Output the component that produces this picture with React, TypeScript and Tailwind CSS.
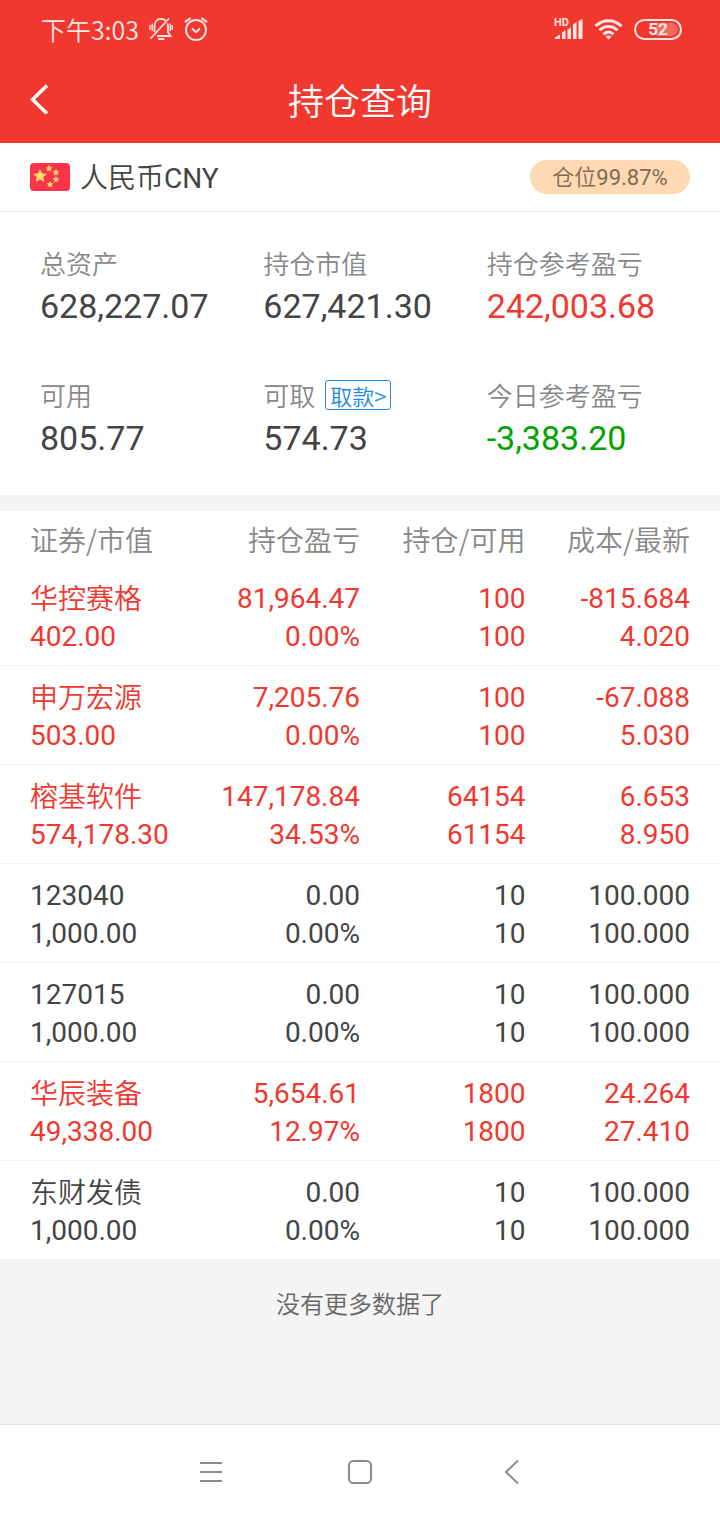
import { ReactNode } from "react";

const summary = [
  { label: "总资产", value: "628,227.07", color: "text-[#444444]" },
  { label: "持仓市值", value: "627,421.30", color: "text-[#444444]" },
  { label: "持仓参考盈亏", value: "242,003.68", color: "text-[#f1382f]" },
  { label: "可用", value: "805.77", color: "text-[#444444]" },
  { label: "可取", value: "574.73", color: "text-[#444444]", withdraw: true },
  { label: "今日参考盈亏", value: "-3,383.20", color: "text-[#00a300]" },
];

const columns = ["证券/市值", "持仓盈亏", "持仓/可用", "成本/最新"];

// each cell holds its upper and lower line
const holdings = [
  { up: true, cells: [["华控赛格", "402.00"], ["81,964.47", "0.00%"], ["100", "100"], ["-815.684", "4.020"]] },
  { up: true, cells: [["申万宏源", "503.00"], ["7,205.76", "0.00%"], ["100", "100"], ["-67.088", "5.030"]] },
  { up: true, cells: [["榕基软件", "574,178.30"], ["147,178.84", "34.53%"], ["64154", "61154"], ["6.653", "8.950"]] },
  { up: false, cells: [["123040", "1,000.00"], ["0.00", "0.00%"], ["10", "10"], ["100.000", "100.000"]] },
  { up: false, cells: [["127015", "1,000.00"], ["0.00", "0.00%"], ["10", "10"], ["100.000", "100.000"]] },
  { up: true, cells: [["华辰装备", "49,338.00"], ["5,654.61", "12.97%"], ["1800", "1800"], ["24.264", "27.410"]] },
  { up: false, cells: [["东财发债", "1,000.00"], ["0.00", "0.00%"], ["10", "10"], ["100.000", "100.000"]] },
];

const cellPadding = ["pl-[30px] text-left", "text-right", "text-right", "pr-[30px] text-right"];

const cjk = "font-['Noto_Sans_CJK_SC',sans-serif] font-[350]";

function isChinese(text: string) {
  return /[\u4e00-\u9fff]/.test(text);
}

function StatusBar() {
  return (
    <div className="flex h-[58px] items-center justify-between pr-[38px] pl-[41px] text-[#ffe6e4]">
      <div className="flex items-center">
        <span className={`text-[25px] leading-[30px] ${cjk}`}>下午3:03</span>
        <svg className="ml-2.5 h-6 w-6" viewBox="0 0 24 24" fill="none" stroke="currentColor" strokeWidth="1.8">
          <path d="M5.500 15V9.500C5.500 5 8 1.800 12 1.800c2 0 3.700.7 4.800 1.900M18.500 6.500c.3.8.4 1.900.4 3V15l2.600 4H8" />
          <path d="M1.500 21.500 20 1.500" />
          <path d="M10 22h4.500" strokeWidth="2.200" strokeLinecap="round" />
          <path d="M1 8v5M3.200 6.500v7.500M21.200 6.500v7.500M23.200 8v5" strokeWidth="1.400" />
        </svg>
        <svg className="ml-[11px] h-6 w-6" viewBox="0 0 24 24" fill="none" stroke="currentColor" strokeWidth="1.800">
          <circle cx="12" cy="13" r="10" />
          <path d="M1 5.200 6.500 1M23 5.200 17.500 1" strokeWidth="2.200" />
          <path d="m8 11.500 4 3.700 4-3.700" strokeWidth="2" />
        </svg>
      </div>
      <div className="flex items-center gap-[11px]">
        <svg className="h-[24px] w-[29px]" viewBox="0 0 29 24" fill="currentColor">
          <text x="0" y="9" fontSize="11" fontWeight="700" fontFamily="Roboto, sans-serif">
            HD
          </text>
          <path d="M1 22v-1.500L6 17.500V22zM8 22v-6.500l3.500-2.500v9zM13.500 22V12.500l3.500-2V22z" />
          <path d="M19 22V7.500l3.500-2.500v17zM24.500 22V4L28.500 2v20z" />
        </svg>
        <svg className="h-[22px] w-[29px]" viewBox="0 0 29 22" fill="none" stroke="currentColor" strokeWidth="3">
          <path d="M1.500 8.200c7.500-7.400 18.500-7.400 26 0" />
          <path d="M5.500 12.300c5.300-5.200 12.700-5.200 18 0" />
          <path d="M9.500 16.300c3-3 7-3 10 0" />
          <path d="M11.500 18.500q3-2.200 6 0l-3 3z" fill="currentColor" stroke="none" />
        </svg>
        <div className="relative flex h-[21px] w-12 items-center justify-center rounded-full border-2 border-[#ffe6e4]">
          <span className="absolute inset-y-0.5 right-0.5 left-5 rounded-r-full bg-white/25" />
          <span className="relative text-[17px] leading-none font-bold">52</span>
        </div>
      </div>
    </div>
  );
}

function Flag() {
  const star = "M0-5 1.500-1.800 5-1.500 2.300.8 3.100 4.300 0 2.400-3.100 4.300-2.300.8-5-1.500-1.500-1.800z";
  return (
    <svg className="h-7 w-10" viewBox="0 0 40 28" fill="#ffd96b" stroke="#ffd96b" strokeLinejoin="round">
      <rect width="40" height="28" rx="4" fill="#fc3449" stroke="none" />
      <path d={star} transform="translate(10 13) scale(1.150)" />
      <path d={star} transform="translate(19 5.500) scale(.6)" />
      <path d={star} transform="translate(26 9.500) scale(.6)" />
      <path d={star} transform="translate(26 16.500) scale(.6)" />
      <path d={star} transform="translate(20 21.500) scale(.6)" />
    </svg>
  );
}

function NavButton({ label, children }: { label: string; children: ReactNode }) {
  return (
    <button type="button" aria-label={label} className="flex h-12 w-12 items-center justify-center">
      <svg className="h-6 w-6" viewBox="0 0 24 24" fill="none" stroke="#8c8c8c" strokeWidth="2">
        {children}
      </svg>
    </button>
  );
}

export default function App() {
  return (
    <div className="flex min-h-screen flex-col bg-[#f4f4f4] font-[Roboto,'Noto_Sans_CJK_SC',sans-serif] text-[#444444]">
      <header className="bg-[#f1382f] pb-px">
        <StatusBar />
        <div className="grid h-[84px] grid-cols-[1fr_auto_1fr] items-center px-[30px] pb-0.5 text-white">
          <button type="button" aria-label="返回" className="w-fit">
            <svg className="h-[30px] w-[18px]" viewBox="0 0 18 30" fill="none" stroke="currentColor" strokeWidth="3.500">
              <path d="M17 1.500 2.500 15.500 17 29.500" />
            </svg>
          </button>
          <h1 className={`text-[36px] leading-[42px] ${cjk}`}>持仓查询</h1>
        </div>
      </header>

      <section className="flex h-[69px] items-center justify-between border-b border-[#ebebeb] bg-white px-[30px]">
        <div className="flex items-center">
          <Flag />
          <span className={`ml-2.5 text-[28px] leading-[40px] ${cjk}`}>
            人民币<span className="font-[Roboto,sans-serif] font-normal">CNY</span>
          </span>
        </div>
        <span className="flex h-[34px] w-40 items-center justify-center rounded-full bg-[#fed9b1] text-[22px] text-[#7f6a54]">
          <span className="font-[350]">仓位</span>99.87%
        </span>
      </section>

      <section className="grid grid-cols-3 gap-y-[50px] bg-white pt-[33px] pr-2.5 pb-9 pl-10">
        {summary.map((item) => (
          <div key={item.label}>
            <div className={`mb-1 flex h-9 items-center text-[26px] leading-[36px] text-[#888888] ${cjk}`}>
              {item.label}
              {item.withdraw && (
                <a
                  href="#withdraw"
                  className="ml-2.5 flex h-[30px] items-center rounded-[3px] border border-[#218ce0] px-1 text-[22px] leading-[28px] text-[#218ce0]"
                >
                  取款&gt;
                </a>
              )}
            </div>
            <p className={`text-[34px] leading-[42px] ${item.color}`}>{item.value}</p>
          </div>
        ))}
      </section>

      <main className="mt-4 bg-white">
        <table className="w-full table-fixed text-[28px] leading-[38px]">
          <colgroup>
            <col className="w-[27%]" />
            <col className="w-[23%]" />
            <col className="w-[23%]" />
            <col className="w-[27%]" />
          </colgroup>
          <thead>
            <tr className="h-14 text-[#888888]">
              {columns.map((name, i) => (
                <th key={name} className={`p-0 whitespace-nowrap ${cjk} ${cellPadding[i]}`}>
                  {name}
                </th>
              ))}
            </tr>
          </thead>
          <tbody>
            {holdings.map((row) => (
              <tr
                key={row.cells[0][0]}
                className={`border-b border-[#f2f2f2] last:border-b-0 ${row.up ? "text-[#f1382f]" : ""}`}
              >
                {row.cells.map(([top, bottom], i) => (
                  <td key={i} className={`pt-[13px] pb-[9px] ${cellPadding[i]}`}>
                    <div className={isChinese(top) ? `pb-1 leading-[34px] ${cjk}` : ""}>{top}</div>
                    <div>{bottom}</div>
                  </td>
                ))}
              </tr>
            ))}
          </tbody>
        </table>
      </main>

      <p className={`flex-1 pt-[26px] text-center text-[24px] leading-[36px] text-[#666666] ${cjk}`}>
        没有更多数据了
      </p>

      <nav className="flex h-24 items-center justify-center gap-[102px] border-t border-[#e2e2e2] bg-white pb-0.5">
        <NavButton label="菜单">
          <path d="M2 3h22M2 12h22M2 21h22" />
        </NavButton>
        <NavButton label="主页">
          <rect x="1" y="1" width="22" height="22" rx="4.500" />
        </NavButton>
        <NavButton label="后退">
          <path d="M20 0.500 8 12l12 11.500" />
        </NavButton>
      </nav>
    </div>
  );
}
